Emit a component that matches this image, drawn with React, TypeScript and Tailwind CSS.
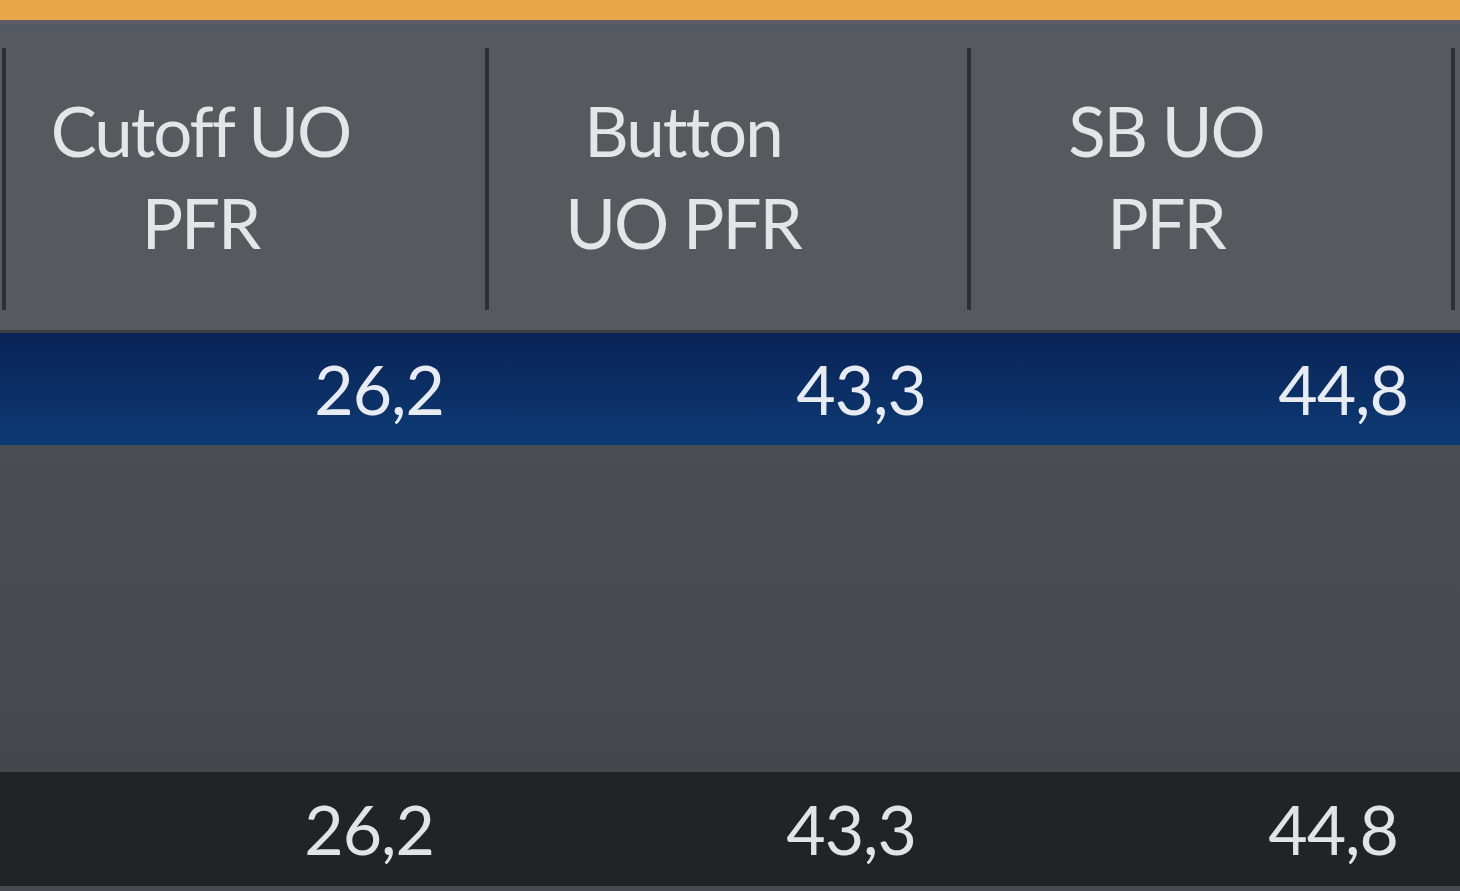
const cols = [
    { head: ['Cutoff UO', 'PFR'], value: '26,2', total: '26,2', w: 'w-[479px]' },
    { head: ['Button', 'UO PFR'], value: '43,3', total: '43,3', w: 'w-[478px]' },
    { head: ['SB UO', 'PFR'], value: '44,8', total: '44,8', w: 'w-[480px]' },
]

const Sep = () => <div className="w-[4px] shrink-0 mt-[16px] mb-[20px] bg-[#2c2f33]" />

const App = () => {
    return (
        <div className="w-[1460px] h-[891px] flex flex-col overflow-hidden bg-[#46494d] text-[#e4e5e6] font-['Lato','Liberation_Sans',sans-serif]">
            <div className="h-[20px] bg-[#e8a646]" />
            <div className="h-[4px] bg-[#5d5b66]" />
            <div className="h-[8px] bg-[#535860]" />

            {/* header */}
            <div className="h-[298px] flex bg-[#56595e] text-[69px] leading-[92px] tracking-[-2px]">
                <div className="w-[2px] shrink-0" />
                <Sep />
                {cols.map((c, i) => (
                    <div key={i} className="flex">
                        <div className={`${c.w} flex flex-col items-center justify-center pr-[90px] pb-[8px]`}>
                            <span>{c.head[0]}</span>
                            <span>{c.head[1]}</span>
                        </div>
                        <Sep />
                    </div>
                ))}
            </div>
            <div className="h-[3px] bg-[#3b3e43]" />

            {/* selected row */}
            <div className="h-[112px] flex items-center bg-gradient-to-b from-[#0a2356] to-[#0c3b74] text-[68px] tracking-[-1px] text-[#e8ecf2]">
                <div className="w-[6px] shrink-0" />
                {cols.map((c, i) => (
                    <div key={i} className={`${i === 0 ? 'w-[479px]' : 'w-[482px]'} text-right pr-[41px]`}>{c.value}</div>
                ))}
            </div>

            {/* empty area */}
            <div className="flex-1 bg-gradient-to-b from-[#4a4d51] to-[#44474b]" />

            {/* totals */}
            <div className="h-[114px] flex items-center bg-[#212427] text-[68px] tracking-[-1px] text-[#e2e3e4]">
                <div className="w-[6px] shrink-0" />
                {cols.map((c, i) => (
                    <div key={i} className={`${i === 0 ? 'w-[479px]' : 'w-[482px]'} text-right pr-[51px]`}>{c.total}</div>
                ))}
            </div>
            <div className="h-[5px] bg-[#46494d]" />
        </div>
    )
}

export default App;
